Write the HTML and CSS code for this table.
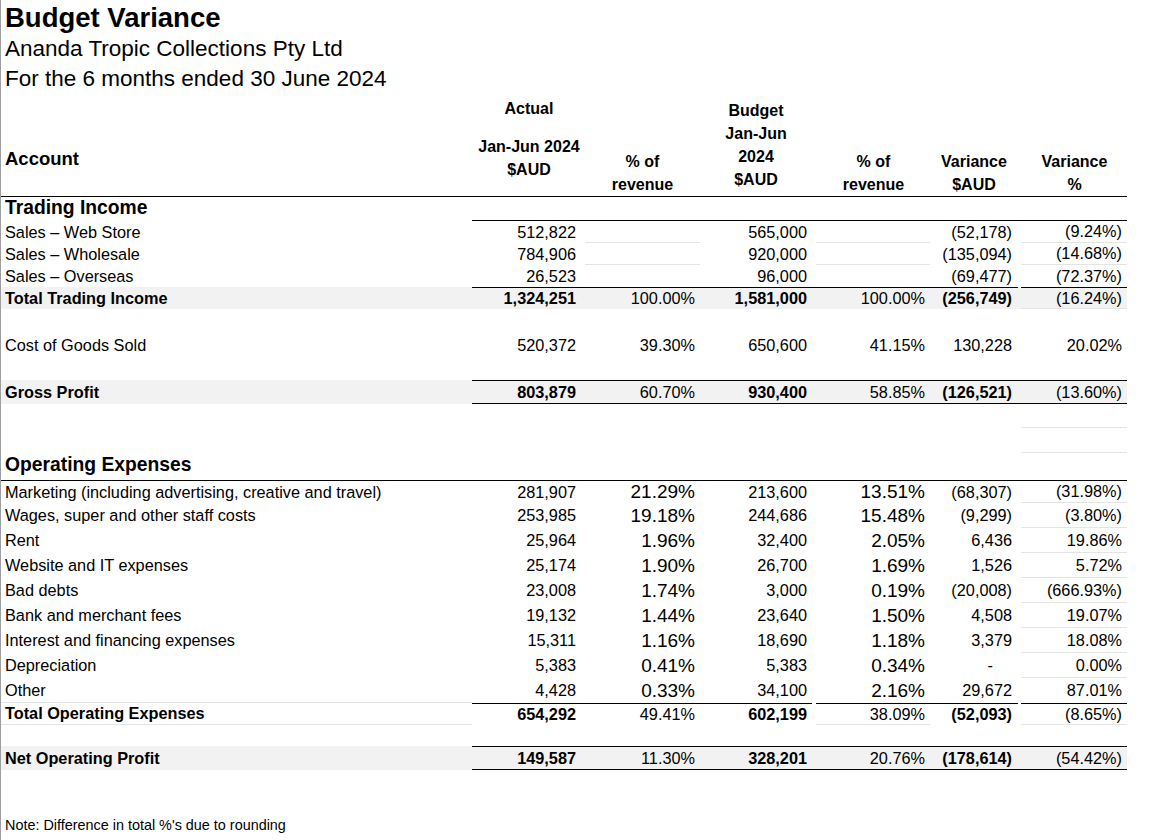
FILE: index.html
```html
<!DOCTYPE html>
<html lang="en">
<head>
<meta charset="utf-8">
<title>Budget Variance</title>
<link rel="stylesheet" href="styles.css">
</head>
<body>
<div class="sheet">
  <header class="title">
    <h1>Budget Variance</h1>
    <p class="sub first">Ananda Tropic Collections Pty Ltd</p>
    <p class="sub">For the 6 months ended 30 June 2024</p>
  </header>

  <div class="table">
    <div class="row head">
      <div class="c acc">Account</div>
      <div class="c h-actual"><div>Actual</div><div class="spaced">Jan-Jun 2024</div><div>$AUD</div></div>
      <div class="c h-low"><div>% of</div><div>revenue</div></div>
      <div class="c h-budget"><div>Budget</div><div>Jan-Jun</div><div>2024</div><div>$AUD</div></div>
      <div class="c h-low"><div>% of</div><div>revenue</div></div>
      <div class="c h-low"><div>Variance</div><div>$AUD</div></div>
      <div class="c h-low"><div>Variance</div><div>%</div></div>
    </div>

    <div class="row section ti-head">
      <div class="c acc">Trading Income</div>
      <div class="c"></div><div class="c"></div><div class="c"></div><div class="c"></div><div class="c"></div><div class="c"></div>
    </div>

    <div class="row r22 faint-pct faint-vp">
      <div class="c acc">Sales – Web Store</div>
      <div class="c">512,822</div><div class="c"></div><div class="c">565,000</div><div class="c"></div><div class="c">(52,178)</div><div class="c">(9.24%)</div>
    </div>
    <div class="row r22 faint-pct faint-vp">
      <div class="c acc">Sales – Wholesale</div>
      <div class="c">784,906</div><div class="c"></div><div class="c">920,000</div><div class="c"></div><div class="c">(135,094)</div><div class="c">(14.68%)</div>
    </div>
    <div class="row r22">
      <div class="c acc">Sales – Overseas</div>
      <div class="c">26,523</div><div class="c"></div><div class="c">96,000</div><div class="c"></div><div class="c">(69,477)</div><div class="c">(72.37%)</div>
    </div>
    <div class="row r22 total shaded rule-top faint-vp">
      <div class="c acc">Total Trading Income</div>
      <div class="c">1,324,251</div><div class="c">100.00%</div><div class="c">1,581,000</div><div class="c">100.00%</div><div class="c">(256,749)</div><div class="c">(16.24%)</div>
    </div>

    <div class="row blank h24"></div>

    <div class="row h24">
      <div class="c acc">Cost of Goods Sold</div>
      <div class="c">520,372</div><div class="c">39.30%</div><div class="c">650,600</div><div class="c">41.15%</div><div class="c">130,228</div><div class="c">20.02%</div>
    </div>

    <div class="row blank h23"></div>

    <div class="row h24 total shaded rule-top rule-bottom">
      <div class="c acc">Gross Profit</div>
      <div class="c">803,879</div><div class="c">60.70%</div><div class="c">930,400</div><div class="c">58.85%</div><div class="c">(126,521)</div><div class="c">(13.60%)</div>
    </div>

    <div class="row h24 faint-vp">
      <div class="c acc"></div><div class="c"></div><div class="c"></div><div class="c"></div><div class="c"></div><div class="c"></div><div class="c"></div>
    </div>
    <div class="row h25 faint-vp">
      <div class="c acc"></div><div class="c"></div><div class="c"></div><div class="c"></div><div class="c"></div><div class="c"></div><div class="c"></div>
    </div>

    <div class="row section ox-head">
      <div class="c acc">Operating Expenses</div>
      <div class="c"></div><div class="c"></div><div class="c"></div><div class="c"></div><div class="c"></div><div class="c"></div>
    </div>

    <div class="row r22 exp faint-vp">
      <div class="c acc">Marketing (including advertising, creative and travel)</div>
      <div class="c">281,907</div><div class="c">21.29%</div><div class="c">213,600</div><div class="c">13.51%</div><div class="c">(68,307)</div><div class="c">(31.98%)</div>
    </div>
    <div class="row h25 exp faint-vp">
      <div class="c acc">Wages, super and other staff costs</div>
      <div class="c">253,985</div><div class="c">19.18%</div><div class="c">244,686</div><div class="c">15.48%</div><div class="c">(9,299)</div><div class="c">(3.80%)</div>
    </div>
    <div class="row h25 exp faint-vp">
      <div class="c acc">Rent</div>
      <div class="c">25,964</div><div class="c">1.96%</div><div class="c">32,400</div><div class="c">2.05%</div><div class="c">6,436</div><div class="c">19.86%</div>
    </div>
    <div class="row h25 exp faint-vp">
      <div class="c acc">Website and IT expenses</div>
      <div class="c">25,174</div><div class="c">1.90%</div><div class="c">26,700</div><div class="c">1.69%</div><div class="c">1,526</div><div class="c">5.72%</div>
    </div>
    <div class="row h25 exp faint-vp">
      <div class="c acc">Bad debts</div>
      <div class="c">23,008</div><div class="c">1.74%</div><div class="c">3,000</div><div class="c">0.19%</div><div class="c">(20,008)</div><div class="c">(666.93%)</div>
    </div>
    <div class="row h25 exp faint-vp">
      <div class="c acc">Bank and merchant fees</div>
      <div class="c">19,132</div><div class="c">1.44%</div><div class="c">23,640</div><div class="c">1.50%</div><div class="c">4,508</div><div class="c">19.07%</div>
    </div>
    <div class="row h25 exp faint-vp">
      <div class="c acc">Interest and financing expenses</div>
      <div class="c">15,311</div><div class="c">1.16%</div><div class="c">18,690</div><div class="c">1.18%</div><div class="c">3,379</div><div class="c">18.08%</div>
    </div>
    <div class="row h25 exp faint-vp">
      <div class="c acc">Depreciation</div>
      <div class="c">5,383</div><div class="c">0.41%</div><div class="c">5,383</div><div class="c">0.34%</div><div class="c"><span class="dash">-</span></div><div class="c">0.00%</div>
    </div>
    <div class="row h25 exp faint-acc">
      <div class="c acc">Other</div>
      <div class="c">4,428</div><div class="c">0.33%</div><div class="c">34,100</div><div class="c">2.16%</div><div class="c">29,672</div><div class="c">87.01%</div>
    </div>
    <div class="row r22 total rule-top faint-end">
      <div class="c acc">Total Operating Expenses</div>
      <div class="c">654,292</div><div class="c">49.41%</div><div class="c">602,199</div><div class="c">38.09%</div><div class="c">(52,093)</div><div class="c">(8.65%)</div>
    </div>

    <div class="row blank h21"></div>

    <div class="row h24 total shaded rule-top rule-bottom">
      <div class="c acc">Net Operating Profit</div>
      <div class="c">149,587</div><div class="c">11.30%</div><div class="c">328,201</div><div class="c">20.76%</div><div class="c">(178,614)</div><div class="c">(54.42%)</div>
    </div>
  </div>

  <p class="note">Note: Difference in total %'s due to rounding</p>
</div>
</body>
</html>
```

FILE: styles.css
```css
html, body {
  margin: 0;
  padding: 0;
  background: #ffffff;
}

.sheet {
  box-sizing: border-box;
  min-height: 840px;
  border-left: 1px solid #9e9e9e;
  font-family: "Liberation Sans", Arial, sans-serif;
  color: #000000;
  font-size: 16.3px;
}

/* ---------- title ---------- */
.title {
  padding: 3px 0 0 4px;
  height: 94px;
  box-sizing: border-box;
}
.title h1 {
  margin: 0;
  font-size: 27.5px;
  line-height: 29px;
  font-weight: bold;
}
.title .sub {
  margin: 0;
  font-size: 22.5px;
  line-height: 30px;
}
.title .sub.first {
  margin-top: 2px;
}

/* ---------- table ---------- */
.table {
  width: 1126px;
}
.row {
  display: grid;
  grid-template-columns: 471px 108px 120px 112px 118px 88px 109px;
  box-sizing: border-box;
}
.c {
  box-sizing: border-box;
  display: flex;
  align-items: center;
  justify-content: flex-end;
  white-space: nowrap;
}
.c.acc {
  justify-content: flex-start;
  padding-left: 4px;
}
.row > .c:nth-child(2) { padding-right: 4px; }
.row > .c:nth-child(3) { padding-right: 5px; }
.row > .c:nth-child(4) { padding-right: 5px; }
.row > .c:nth-child(5) { padding-right: 5px; }
.row > .c:nth-child(6) { padding-right: 6px; }
.row > .c:nth-child(7) { padding-right: 5px; }

/* row heights */
.r22 { height: 22px; }
.h21 { height: 21px; }
.h23 { height: 23px; }
.h24 { height: 24px; }
.h25 { height: 25px; }

/* header row */
.head {
  height: 101px;
}
.head .c {
  display: block;
  border-bottom: 1px solid #000;
  font-weight: bold;
  font-size: 16px;
  line-height: 23px;
  text-align: center;
  padding-right: 0;
}
.head .c.acc {
  text-align: left;
  font-size: 18.5px;
  padding-top: 52.5px;
}
.head .h-actual {
  padding-top: 2.5px;
  padding-left: 6px;
}
.head .h-actual .spaced {
  margin-top: 15px;
}
.head .h-low {
  padding-top: 55.5px;
}
.head > .c:nth-child(3),
.head > .c:nth-child(5) {
  padding-left: 5px;
}
.head > .c:nth-child(7) {
  padding-left: 4px;
}
.head .h-budget {
  padding-top: 4.5px;
}
.head > .c:nth-child(n) {
  padding-right: 0;
}

/* section headings */
.section .c.acc {
  font-weight: bold;
  font-size: 19.3px;
  align-items: flex-start;
}
.ti-head {
  height: 26px;
}
.ti-head .c.acc {
  line-height: 26px;
}
.ti-head .c:not(.acc) {
  border-bottom: 1px solid #000;
}
.ox-head {
  height: 28px;
}
.ox-head .c {
  border-bottom: 1px solid #000;
}
.ox-head .c.acc {
  line-height: 24px;
}

/* totals */
.total .c.acc,
.total > .c:nth-child(2),
.total > .c:nth-child(4),
.total > .c:nth-child(6) {
  font-weight: bold;
}
.shaded {
  background: #f2f2f2;
}
.rule-top .c:not(.acc) {
  border-top: 1px solid #000;
}
.rule-bottom .c:not(.acc) {
  border-bottom: 1px solid #000;
}

/* faint cell borders */
.faint-pct > .c:nth-child(3) {
  border-bottom: 1px solid #e4e4e4;
  margin-left: 5px;
}
.faint-pct > .c:nth-child(5) {
  border-bottom: 1px solid #e4e4e4;
  margin-left: 4px;
}
.faint-vp > .c:nth-child(7) {
  border-bottom: 1px solid #e4e4e4;
  margin-left: 3px;
}
.faint-acc > .c.acc {
  border-bottom: 1px solid #e4e4e4;
}
.faint-end > .c.acc {
  border-bottom: 1px solid #e4e4e4;
}
.faint-end > .c:nth-child(5) {
  border-bottom: 1px solid #e4e4e4;
  margin-left: 4px;
}
.faint-end > .c:nth-child(7) {
  border-bottom: 1px solid #e4e4e4;
  margin-left: 3px;
}

/* expenses: % of revenue columns in larger type */
.exp > .c:nth-child(3),
.exp > .c:nth-child(5) {
  font-size: 19px;
}
.dash {
  padding-right: 19px;
}

/* note */
.note {
  margin: 46px 0 0 0;
  padding-left: 4px;
  font-size: 14.4px;
  line-height: 18px;
}
```
